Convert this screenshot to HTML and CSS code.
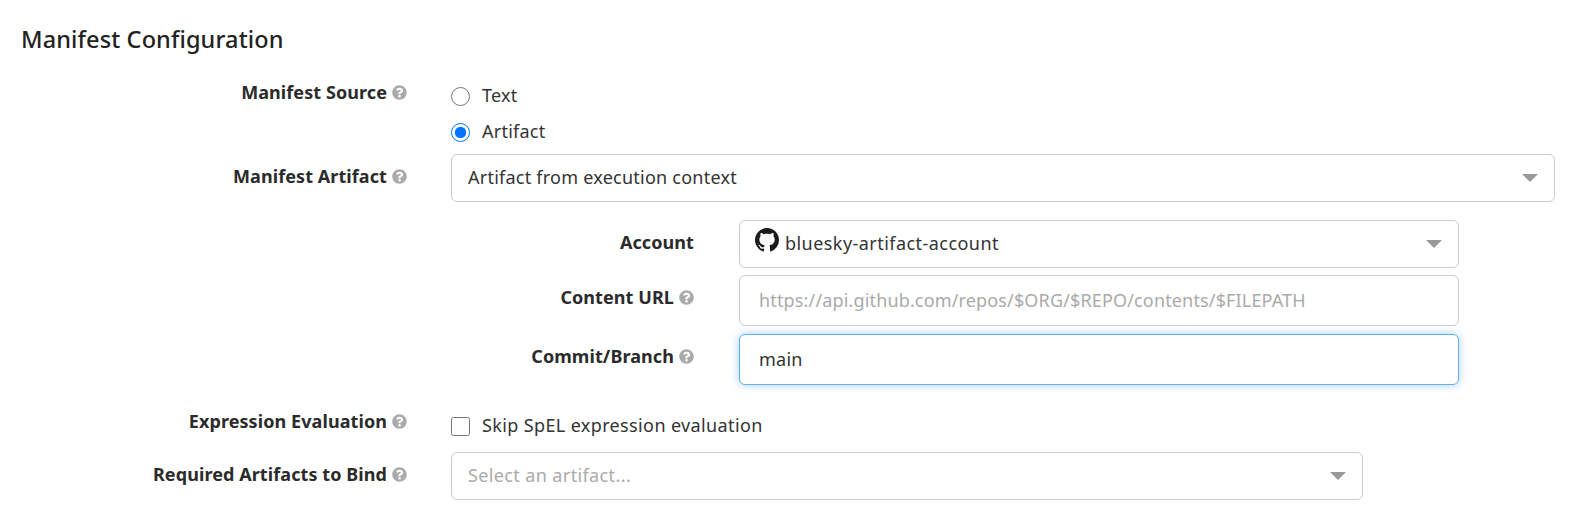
FILE: index.html

```html
<!DOCTYPE html>
<html lang="en">
<head>
  <meta charset="UTF-8">
  <title>Manifest Configuration</title>
  <link rel="stylesheet" href="styles.css">
</head>
<body>
  <svg class="defs">
    <symbol id="help" viewBox="0 0 512 512">
      <path d="M504 256c0 136.997-111.043 248-248 248S8 392.997 8 256C8 119.083 119.043 8 256 8s248 111.083 248 248zM262.655 90c-54.497 0-89.255 22.957-116.549 63.758-3.536 5.286-2.353 12.415 2.715 16.258l34.699 26.31c5.205 3.947 12.621 3.008 16.665-2.122 17.864-22.658 30.113-35.797 57.303-35.797 20.429 0 45.698 13.148 45.698 32.958 0 14.976-12.363 22.667-32.534 33.976C247.128 238.528 216 254.941 216 296v4c0 6.627 5.373 12 12 12h56c6.627 0 12-5.373 12-12v-1.333c0-28.462 83.186-29.647 83.186-106.667 0-58.002-60.165-102-116.531-102zM256 338c-25.365 0-46 20.635-46 46 0 25.364 20.635 46 46 46s46-20.636 46-46c0-25.365-20.635-46-46-46z"/>
    </symbol>
  </svg>

  <h3 class="title">Manifest Configuration</h3>

  <form class="form">
    <div class="row row-options">
      <div class="label">Manifest Source<svg class="help"><use href="#help"/></svg></div>
      <div class="options">
        <label class="option"><input type="radio" name="source"> Text</label>
        <label class="option"><input type="radio" name="source" checked> Artifact</label>
      </div>
    </div>

    <div class="row">
      <div class="label">Manifest Artifact<svg class="help"><use href="#help"/></svg></div>
      <div class="select"><span>Artifact from execution context</span><i class="caret"></i></div>
    </div>

    <div class="nested">
      <div class="nested-row">
        <div class="label">Account</div>
        <div class="select">
          <svg class="github" viewBox="0 0 16 16"><path d="M8 0C3.58 0 0 3.58 0 8c0 3.54 2.29 6.53 5.47 7.59.4.07.55-.17.55-.38 0-.19-.01-.82-.01-1.49-2.01.37-2.53-.49-2.69-.94-.09-.23-.48-.94-.82-1.13-.28-.15-.68-.52-.01-.53.63-.01 1.08.58 1.23.82.72 1.21 1.87.87 2.33.66.07-.52.28-.87.51-1.07-1.78-.2-3.64-.89-3.64-3.95 0-.87.31-1.59.82-2.15-.08-.2-.36-1.02.08-2.12 0 0 .67-.21 2.2.82.64-.18 1.32-.27 2-.27.68 0 1.36.09 2 .27 1.53-1.04 2.2-.82 2.2-.82.44 1.1.16 1.92.08 2.12.51.56.82 1.27.82 2.15 0 3.07-1.87 3.75-3.65 3.95.29.25.54.73.54 1.48 0 1.07-.01 1.93-.01 2.2 0 .21.15.46.55.38A8.013 8.013 0 0016 8c0-4.42-3.58-8-8-8z"/></svg>
          <span class="account-name">bluesky-artifact-account</span><i class="caret"></i>
        </div>
      </div>
      <div class="nested-row">
        <div class="label">Content URL<svg class="help"><use href="#help"/></svg></div>
        <input class="input" type="text" placeholder="https://api.github.com/repos/$ORG/$REPO/contents/$FILEPATH">
      </div>
      <div class="nested-row">
        <div class="label">Commit/Branch<svg class="help"><use href="#help"/></svg></div>
        <input class="input input-focus" type="text" value="main">
      </div>
    </div>

    <div class="row row-check">
      <div class="label">Expression Evaluation<svg class="help"><use href="#help"/></svg></div>
      <div class="options">
        <label class="option"><input type="checkbox"> Skip SpEL expression evaluation</label>
      </div>
    </div>

    <div class="row">
      <div class="label">Required Artifacts to Bind<svg class="help"><use href="#help"/></svg></div>
      <div class="select select-short"><span class="placeholder">Select an artifact...</span><i class="caret"></i></div>
    </div>
  </form>
</body>
</html>
```

FILE: styles.css

```css
body {
  margin: 0;
  padding: 26px 40px 0 21px;
  font-family: "Noto Sans", sans-serif;
  font-size: 18px;
  letter-spacing: 0.24px;
  color: #333;
  background: #fff;
  overflow: hidden;
}

.defs {
  display: none;
}

.title {
  margin: 0 0 18px;
  font-size: 23.5px;
  line-height: 26px;
  font-weight: 500;
  letter-spacing: 0.12px;
  color: #222;
}

.row {
  display: grid;
  grid-template-columns: 386px 1fr;
  column-gap: 44px;
}

.label {
  display: flex;
  justify-content: flex-end;
  align-items: center;
  gap: 5px;
  height: 24px;
  padding-top: 10px;
  font-weight: 700;
  letter-spacing: 0.08px;
  color: #2b2b2b;
}

.help {
  width: 15px;
  height: 15px;
  fill: #aaa;
  flex-shrink: 0;
}

.options {
  display: flex;
  flex-direction: column;
  gap: 10px;
}

.row-options {
  margin-bottom: 10px;
}

.row-options .options {
  padding-top: 12px;
}

.row-check {
  margin: 14px 0;
}

.row-check .options {
  padding-top: 13px;
  letter-spacing: 0.37px;
}

.option {
  display: flex;
  align-items: center;
  gap: 12px;
  height: 26px;
}

.option input {
  width: 19px;
  height: 19px;
  margin: 2px 0 0;
}

.select {
  display: flex;
  align-items: center;
  box-sizing: border-box;
  height: 48px;
  padding: 0 16px 2px;
  border: 1px solid #ccc;
  border-radius: 6px;
}

.select span {
  flex: 1;
}

.select-short {
  width: 912px;
}

.account-name {
  letter-spacing: 0.45px;
}

.placeholder {
  letter-spacing: 0.38px;
  color: #aaa;
}

.caret {
  width: 0;
  height: 0;
  margin-top: 2px;
  border-left: 8px solid transparent;
  border-right: 8px solid transparent;
  border-top: 8px solid #999;
}

.github {
  width: 24px;
  height: 24px;
  margin: -6px 6px 0 -1px;
  fill: #1b1b1b;
}

.nested {
  margin: 18px 96px 0 0;
}

.nested-row {
  display: grid;
  grid-template-columns: 673px 1fr;
  column-gap: 45px;
}

.nested-row + .nested-row {
  margin-top: 7px;
}

.nested-row + .nested-row + .nested-row {
  margin-top: 8px;
}

.input {
  box-sizing: border-box;
  width: 100%;
  height: 51px;
  padding: 0 19px 2px;
  border: 1px solid #ccc;
  border-radius: 6px;
  font: inherit;
  letter-spacing: inherit;
  color: #333;
  outline: none;
}

.input::placeholder {
  letter-spacing: 0.15px;
  color: #aaa;
}

.input-focus {
  border-color: #66afe9;
  box-shadow: 0 0 8px rgba(102, 175, 233, 0.6);
}
```
